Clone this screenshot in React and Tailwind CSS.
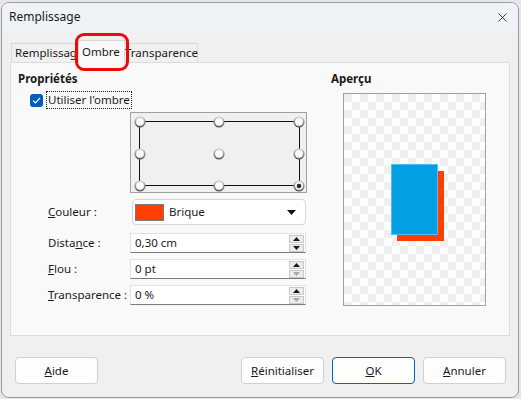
import { X } from 'lucide-react'

function Spin({ downDisabled }) {
  return (
    <div className="flex flex-col gap-[1px] mr-[1px]">
      <div className="grid h-[8px] w-[15px] place-items-center border border-[#c8c8c8] bg-[#ececec]">
        <svg width="7" height="4" viewBox="0 0 7 4"><path d="M0 4 L3.5 0 L7 4 Z" fill="#1a1a1a" /></svg>
      </div>
      <div className="grid h-[8px] w-[15px] place-items-center border border-[#c8c8c8] bg-[#ececec]">
        <svg width="7" height="4" viewBox="0 0 7 4"><path d="M0 0 L3.5 4 L7 0 Z" fill={downDisabled ? '#a8a8a8' : '#1a1a1a'} /></svg>
      </div>
    </div>
  )
}

function Dot({ cx, cy, on }) {
  return (
    <g>
      <circle cx={cx} cy={cy} r="5.5" fill="url(#ring)" />
      <circle cx={cx} cy={cy} r="3.8" fill="#fafafa" />
      {on && <circle cx={cx} cy={cy} r="2.3" fill="#2a2a2a" />}
    </g>
  )
}

function Button({ children, primary }) {
  return (
    <div className={`grid h-[27px] w-[83px] place-items-center rounded-[4px] bg-[#fdfdfd] border ${primary ? 'border-[#0067c0]' : 'border-[#d0d0d0]'}`}>
      <span>{children}</span>
    </div>
  )
}

function Row({ label, value, downDisabled, mt }) {
  return (
    <div className={`${mt} flex h-[20px] items-center`}>
      <span className="w-[112px] pl-[30px] box-border">{label}</span>
      <div className="flex h-[20px] w-[176px] items-center justify-between border border-[#e2e2e2] border-b-[#7a7a7a] bg-white pl-[4px]">
        <span>{value}</span>
        <Spin downDisabled={downDisabled} />
      </div>
    </div>
  )
}

export default function App() {
  const xs = [9, 88, 168]
  const ys = [9, 41, 73]
  return (
    <div className="h-[399px] w-[521px] bg-[#e6e6e6] pl-[1px] pt-[2px] text-[11.5px] text-[#1a1a1a]" style={{ fontFamily: '"Noto Sans", "Liberation Sans", sans-serif' }}>
      <div className="relative h-[396px] w-[518px] overflow-hidden rounded-[8px] border border-[#9c9c9c] bg-[#f0f0f0]">
        <div className="flex h-[28px] items-center justify-between bg-[#eff2f7] pl-[7px] pr-[8px]">
          <span className="text-[12px]">Remplissage</span>
          <X size={15} strokeWidth={1.3} className="text-[#1a1a1a]" />
        </div>

        <div className="flex items-end pl-[9px] mt-[7px] h-[24px]">
          <div className="flex h-[19px] items-center border border-b-0 border-[#d9d9d9] bg-[#f0f0f0] pl-[3px] w-[67px]">Remplissage</div>
          <div className="flex h-[23px] items-center border border-b-0 border-[#d9d9d9] bg-[#f9f9f9] pl-[3px] w-[47px] relative z-10 -mb-[1px]">Ombre</div>
          <div className="flex h-[19px] items-center border border-b-0 border-l-0 border-[#d9d9d9] bg-[#f0f0f0] w-[73px]">Transparence</div>
        </div>

        <div className="ml-[8px] flex h-[274px] w-[500px] border border-[#dcdcdc] bg-[#f9f9f9]">
          <div className="w-[320px] pl-[7px] pt-[8px]">
            <div className="h-[16px] font-bold leading-[16px]">Propriétés</div>
            <div className="mt-[4px] flex h-[18px] items-center pl-[12px]">
              <div className="grid h-[13px] w-[13px] place-items-center rounded-[3px] bg-[#005fb8]">
                <svg width="9" height="7" viewBox="0 0 9 7"><path d="M1 3.6 L3.4 6 L8 1" fill="none" stroke="white" strokeWidth="1.2" /></svg>
              </div>
              <span className="ml-[3px] border border-dotted border-[#1a1a1a] px-[1px] leading-[16px]">Utiliser l'ombre</span>
            </div>
            <div className="ml-[112px] mt-[3px] h-[81px] w-[177px] border border-[#a0a0a0] bg-[#f0f0f0]">
              <svg width="175" height="79" viewBox="0 0 175 79">
                <defs>
                  <radialGradient id="ring" cx="50%" cy="35%" r="60%">
                    <stop offset="0%" stopColor="#ffffff" />
                    <stop offset="55%" stopColor="#c8c8c8" />
                    <stop offset="100%" stopColor="#5a5a5a" />
                  </radialGradient>
                </defs>
                <rect x="8.5" y="8.5" width="160" height="64" fill="none" stroke="#111" strokeWidth="1" />
                {ys.map((y, j) => xs.map((x, i) => <Dot key={`${i}-${j}`} cx={x} cy={y} on={i === 2 && j === 2} />))}
              </svg>
            </div>

            <div className="mt-[6px] flex h-[26px] items-center">
              <span className="w-[114px] pl-[30px] box-border"><u>C</u>ouleur :</span>
              <div className="flex h-[26px] w-[174px] items-center rounded-[4px] border border-[#d6d6d6] bg-white pl-[2px] pr-[9px]">
                <div className="h-[17px] w-[29px] border border-[#7a7a7a] bg-[#ff3f00]" />
                <span className="ml-[5px] flex-1">Brique</span>
                <svg width="9" height="5" viewBox="0 0 9 5"><path d="M0 0 L9 0 L4.5 5 Z" fill="#111" /></svg>
              </div>
            </div>

            <Row mt="mt-[8px]" label={<>Dista<u>n</u>ce :</>} value="0,30 cm" />
            <Row mt="mt-[6px]" label={<><u>F</u>lou :</>} value="0 pt" downDisabled />
            <Row mt="mt-[6px]" label={<><u>T</u>ransparence :</>} value="0 %" downDisabled />
          </div>

          <div className="pt-[8px]">
            <div className="h-[16px] font-bold leading-[16px]">Aperçu</div>
            <div className="ml-[12px] mt-[6px] h-[213px] w-[143px] border border-[#a0a0a0] bg-white">
              <svg width="141" height="211" viewBox="0 0 141 211">
                <defs>
                  <pattern id="chk" width="16" height="16" patternUnits="userSpaceOnUse">
                    <rect width="16" height="16" fill="#ffffff" />
                    <rect width="8" height="8" fill="#efefef" />
                    <rect x="8" y="8" width="8" height="8" fill="#efefef" />
                  </pattern>
                </defs>
                <rect width="141" height="211" fill="url(#chk)" />
                <rect x="53" y="77" width="47" height="70" fill="#ff3f00" />
                <rect x="47.5" y="70.5" width="46" height="70" fill="#049ee3" stroke="#4cc0f0" strokeWidth="1" />
              </svg>
            </div>
          </div>
        </div>

        <div className="mt-[21px] flex pl-[13px]">
          <Button><u>A</u>ide</Button>
          <div className="ml-[143px] flex gap-[8px]">
            <Button><u>R</u>éinitialiser</Button>
            <Button primary><u>O</u>K</Button>
            <Button><u>A</u>nnuler</Button>
          </div>
        </div>

        <div className="absolute left-[73px] top-[30px] h-[38px] w-[54px] rounded-[9px] border-[3px] border-[#ee0a0a]" />
      </div>
    </div>
  )
}
